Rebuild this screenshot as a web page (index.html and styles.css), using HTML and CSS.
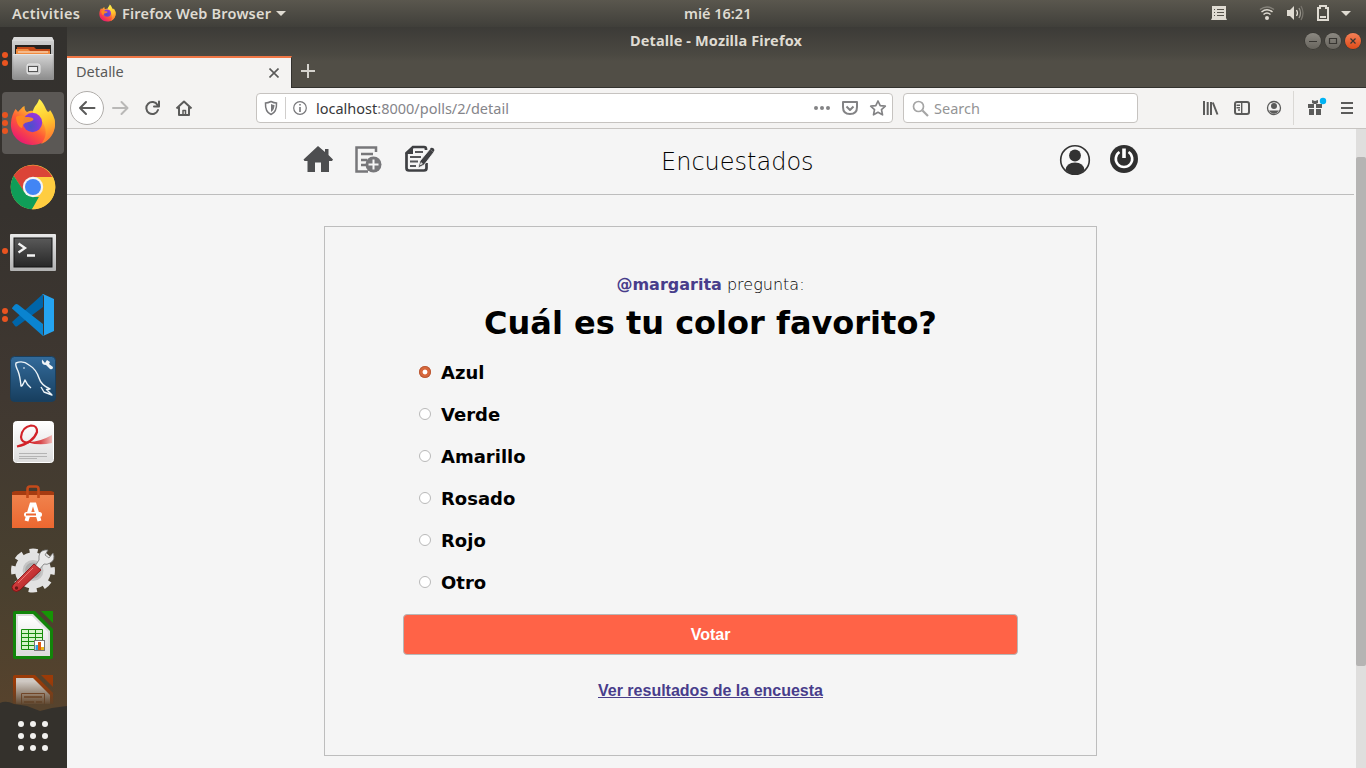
FILE: index.html
```html
<!DOCTYPE html>
<html lang="es">
<head>
<meta charset="utf-8">
<title>Detalle</title>
<link rel="stylesheet" href="styles.css">
</head>
<body>
<svg width="0" height="0" class="defs">
  <defs>
    <linearGradient id="gray" x1="0" y1="0" x2="0" y2="1"><stop offset="0" stop-color="#d5d5d5"/><stop offset="1" stop-color="#8e8e8e"/></linearGradient>
    <linearGradient id="fox" x1="1" y1="0" x2=".2" y2="1"><stop offset="0" stop-color="#fff44f"/><stop offset=".35" stop-color="#ffb02e"/><stop offset=".62" stop-color="#ff5a36"/><stop offset="1" stop-color="#e5107a"/></linearGradient>
    <linearGradient id="flame" x1=".4" y1="0" x2=".6" y2="1"><stop offset="0" stop-color="#fff250"/><stop offset=".5" stop-color="#ffc62c"/><stop offset="1" stop-color="#ff6d33"/></linearGradient>
    <radialGradient id="globe" cx=".4" cy=".7" r=".7"><stop offset="0" stop-color="#4a52c8"/><stop offset=".5" stop-color="#7040d8"/><stop offset="1" stop-color="#9a35d8"/></radialGradient>
    <linearGradient id="screen" x1="0" y1="0" x2="0" y2="1"><stop offset="0" stop-color="#595959"/><stop offset="1" stop-color="#272727"/></linearGradient>
    <linearGradient id="frame" x1="0" y1="0" x2="0" y2="1"><stop offset="0" stop-color="#e8e8e8"/><stop offset="1" stop-color="#b2b2b2"/></linearGradient>
    <linearGradient id="sea" x1="0" y1="0" x2="0" y2="1"><stop offset="0" stop-color="#336b9b"/><stop offset="1" stop-color="#173e5e"/></linearGradient>
    <linearGradient id="paper" x1="0" y1="0" x2="0" y2="1"><stop offset="0" stop-color="#fff"/><stop offset="1" stop-color="#dcdcdc"/></linearGradient>
    <linearGradient id="ribbon" x1="0" y1="0" x2="1" y2="0"><stop offset="0" stop-color="#cf1118"/><stop offset=".6" stop-color="#d94a4d"/><stop offset="1" stop-color="#f0b9b6"/></linearGradient>
    <linearGradient id="bag" x1="0" y1="0" x2="0" y2="1"><stop offset="0" stop-color="#f0824c"/><stop offset="1" stop-color="#ec6730"/></linearGradient>
    <linearGradient id="red" x1="0" y1="0" x2="1" y2="1"><stop offset="0" stop-color="#e75a57"/><stop offset="1" stop-color="#a81216"/></linearGradient>
    <linearGradient id="shadefade" x1="0" y1="0" x2="0" y2="1"><stop offset=".2" stop-color="#5a4129" stop-opacity="0"/><stop offset=".95" stop-color="#5a4129"/></linearGradient>
    <symbol id="firefox" viewBox="0 0 46 48">
      <path fill="url(#fox)" d="M5.500 11C6.500 12 7.500 13 8 14C10 12 12 9 14.500 8C14.500 11 15 13 17 14C20 12.500 26 12 29 15L44 20C48 35 36 47 22.500 47C9 47 0 37 1 25C1.300 19 3.500 14.500 5.500 11Z"/>
      <path fill="url(#flame)" d="M29 1C34 4 35 11 38 14C38 14 40 13 40 12C43 16 45.500 21 45 28C44 38 37 44 31 46C37 39 37 32 33 25C29 20 22 19 23 13C24 8 28 6 29 1Z"/>
      <circle cx="22.500" cy="24.500" r="9.700" fill="url(#globe)"/>
      <path fill="#ff8b1e" d="M6 19C9 17 13 17 15 19C18 19 22 19 23.500 21C23 24 17 23.500 14.500 25.500C12 27 13 29 12 30C8 29 6 23 6 19Z" opacity=".9"/>
    </symbol>
  </defs>
</svg>

<header class="topbar">
  <span class="ui activities">Activities</span>
  <svg class="mini-fox" width="17" height="18"><use href="#firefox"/></svg>
  <span class="ui app-name">Firefox Web Browser</span>
  <svg class="caret" width="10" height="5" viewBox="0 0 10 5"><path fill="#dfdbd2" d="M0 0H10L5 5Z"/></svg>
  <span class="ui clock">mié 16:21</span>
  <svg class="tray" width="160" height="27" viewBox="0 0 160 27" fill="none" stroke="#dfdbd2">
    <path fill="#dfdbd2" stroke="none" d="M6 6H20V18L21 20H5L6 18Z"/>
    <path stroke="#56534b" stroke-width="1" d="M8 9.500H9M11 9.500H18M8 12.500H9M11 12.500H18M8 15.500H9M11 15.500H18"/>
    <circle cx="61" cy="18" r="2" fill="#dfdbd2" stroke="none"/>
    <path stroke-width="1.500" d="M57.500 14.500Q61 11.500 64.500 14.500M55.500 12Q61 7.500 66.500 12"/>
    <path stroke="#85827a" stroke-width="1.500" d="M54 9.500Q61 4.500 68 9.500"/>
    <path fill="#dfdbd2" stroke="none" d="M81 10H84L88 6V20L84 16H81Z"/>
    <path stroke-width="1.300" d="M90.500 10Q92.500 13 90.500 16"/><path stroke="#9b988f" stroke-width="1.300" d="M93 8Q96 13 93 18"/><path stroke="#77746c" stroke-width="1.300" d="M95 6Q99 13 95 20"/>
    <path stroke-width="2" d="M112 8H114V6H120V8H122V20H112Z"/><path stroke-width="2" d="M114 17H120"/>
    <path fill="#dfdbd2" stroke="none" d="M135 11H145L140 16Z"/>
  </svg>
</header>

<div class="desktop">
  <nav class="dock">
    <div class="dock-list">
      <svg class="slot" viewBox="0 0 67 64">
        <g fill="#e95420"><circle cx="5" cy="28" r="3"/><circle cx="5" cy="36" r="3"/></g>
        <path fill="url(#gray)" d="M14 10H52L54 14V52Q54 53 53 53H14Q12 53 12 51V14Z"/><path fill="#dadada" d="M14 10H52L54 14H12Z"/>
        <path fill="#25221f" d="M15 18H51V28H15Z"/><path fill="#c34a18" d="M17 20H34L36 22H50V27H17Z"/><path fill="#f08a3e" d="M16 22H28L30 24H50V28H16Z"/><path fill="#fbe9d6" d="M18 24.500H48V25.500H18Z"/>
        <path fill="url(#gray)" d="M13 27H53L52 52H14Z"/><path fill="#e4e4e4" d="M13 27H53V28H13Z"/>
        <rect x="27" y="37" width="13" height="10" rx="2" fill="#c9c9c9" stroke="#ececec"/><rect x="28.500" y="39.500" width="9" height="5" fill="#eee" stroke="#555"/>
      </svg>
      <svg class="slot" viewBox="0 0 67 64">
        <rect x="2" y="1" width="62" height="62" rx="4" fill="#5b5855"/>
        <g fill="#e95420"><circle cx="5" cy="24" r="3"/><circle cx="5" cy="32" r="3"/><circle cx="5" cy="40" r="3"/></g>
        <use href="#firefox" x="10" y="7" width="46" height="48"/>
      </svg>
      <svg class="slot" viewBox="0 0 67 64">
        <circle cx="33" cy="32" r="22.300" fill="#ffcd40"/>
        <path fill="#db4437" d="M13.700 20.850A22.300 22.300 0 0 1 52.300 22H33L24 37Z"/>
        <path fill="#0f9d58" d="M13.700 20.850L24.300 37L33 42H41.500L32 54.300A22.300 22.300 0 0 1 13.700 20.850Z"/>
        <path fill="#ffcd40" d="M33 22H52.900A22.300 22.300 0 0 1 32 54.300L41.700 37Z"/>
        <circle cx="33" cy="32" r="10.200" fill="#f4f4f4"/><circle cx="33" cy="32" r="8" fill="#4285f4"/>
      </svg>
      <svg class="slot" viewBox="0 0 67 64">
        <circle cx="5" cy="32" r="3" fill="#e95420"/>
        <rect x="10" y="15" width="46" height="37" rx="1" fill="url(#frame)"/><rect x="14" y="19" width="38" height="29" fill="url(#screen)" stroke="#151515"/>
        <path fill="none" stroke="#f3f3f3" stroke-width="2.300" d="M18.500 24.500L25 29L18.500 33.500M27 36.500H35"/>
      </svg>
      <svg class="slot" viewBox="0 0 67 64">
        <g fill="#e95420"><circle cx="5" cy="28" r="3"/><circle cx="5" cy="36" r="3"/></g>
        <path fill="#0065a9" d="M12 39L15 43Q16 44 17.500 43L43 24V11L12 39Z"/>
        <path fill="#0a84d0" d="M12 25L15 21.500Q16.500 20.500 18 21.500L43 41V53L12 25.500Z"/>
        <path fill="#25a4f1" d="M43 11L54 16V48L43 53Q44 53 44 50V14Q44 11 42 11.500Z"/>
      </svg>
      <svg class="slot" viewBox="0 0 67 64">
        <rect x="10.500" y="9.500" width="45" height="45" rx="4" fill="url(#sea)" stroke="#1a3f5d"/>
        <path fill="none" stroke="#edf4f8" stroke-width="1.400" stroke-linejoin="round" d="M31 41Q27 38 25 33Q22 40 21 39Q20 29 18 24Q15 18 16 16Q23 13 29 18Q36 22 39 31Q41 38 50 42L46.500 42.500L52 48L44 45L41 40"/><circle cx="24" cy="21" r=".8" fill="#fff"/>
        <path fill="#f1f5f7" d="M42 12.500L45 16L47 13L50 15L49 17L53 20Q53 23 50 22L46 18Q41 18 42 12.500Z"/>
      </svg>
      <svg class="slot" viewBox="0 0 67 64">
        <rect x="13.500" y="10.500" width="40" height="41" rx="3" fill="url(#paper)" stroke="#fff"/>
        <path fill="none" stroke="#d22228" stroke-width="2.200" d="M17 35.500Q33 32 37 21Q37.500 14.500 31 14.500Q22 16 21 26Q21.500 32 29 31.500"/><path fill="url(#ribbon)" d="M24 30.500Q36 33 52 24V32Q38 35 24 30.500Z"/>
        <path stroke="#b4b4b4" d="M19 42.500H47M19 45.500H47M19 47.500H37"/>
      </svg>
      <svg class="slot" viewBox="0 0 67 64">
        <path fill="#a63b11" d="M12 17L15 16H51L54 17V22H12Z"/><path fill="url(#bag)" d="M12 20H54V53H12Z"/>
        <path fill="none" stroke="#c44a1a" stroke-width="2.600" d="M27.500 23V14Q27.500 11.500 30 11.500H36Q38.500 11.500 38.500 14V23"/>
        <path fill="none" stroke="#fff" stroke-width="4" d="M26.500 46L31.500 29.500H34.500L39.500 46"/><rect x="24" y="37" width="18" height="5" rx="2.500" fill="#fff"/><path stroke="#ec6730" stroke-width="2" d="M26 39.500H36"/>
      </svg>
      <svg class="slot" viewBox="0 0 67 64">
        <circle cx="33" cy="31.500" r="19.200" fill="none" stroke="#e4e4e4" stroke-width="5.500" stroke-dasharray="8.080 7" stroke-dashoffset="4.040"/>
        <circle cx="33" cy="31.500" r="14.200" fill="#c4c4c4" stroke="#e2e2e2" stroke-width="7.500"/><circle cx="33" cy="31.500" r="8" fill="#aaa"/>
        <path fill="#e9e9e9" stroke="#777" stroke-width=".8" d="M35 27L39 21Q38 12 45 11H48L45 16L49 19L53 14Q56 21 50 24Q47 26 44 25L39 31Z"/>
        <path fill="url(#red)" stroke="#81090d" stroke-width=".8" d="M34 25L41 31L20 51Q16 54 13 51Q11 48 13 46Z"/><circle cx="16.500" cy="49" r="1.700" fill="#6b1917"/><path stroke="#ee7775" d="M33 29L18 44"/>
      </svg>
      <svg class="slot" viewBox="0 0 67 64">
        <path fill="#12850a" d="M15 8H35L53 26V54Q53 56 51 56H15Q13 56 13 54V10Q13 8 15 8Z"/><path fill="#169505" d="M41 8H53V20Z"/><path fill="#dedede" d="M16 11H33L50 28V53H16Z"/><path fill="url(#paper)" d="M18 13H32L48 29V51H18Z"/>
        <path fill="#d4f4c8" stroke="#168c0b" d="M21.500 26.500H42.500V46.500H21.500ZM21.500 30.500H42.500M21.500 34.500H42.500M21.500 38.500H42.500M21.500 42.500H42.500M28.500 26.500V46.500M35.500 26.500V46.500"/>
        <rect x="34.500" y="37.500" width="10" height="10" fill="#fff" stroke="#777"/><path fill="#2e9fe0" d="M35.500 42H38V47H35.500Z"/><path fill="#df5a14" d="M38 39H41V47H38Z"/><path fill="#e8b41a" d="M41 44H44V47H41Z"/>
      </svg>
      <svg class="slot" viewBox="0 0 67 64">
        <path fill="#9b3b08" d="M15 8H35L53 26V56H13V10Q13 8 15 8Z"/><path fill="#9b3b08" d="M41 8H53V20Z"/><path fill="#cfc9c3" d="M16 11H33L50 28V56H16Z"/>
        <path fill="#d8c7b8" stroke="#884a25" d="M21.500 26.500H44.500V45H21.500Z"/><path stroke="#99623d" stroke-width="2" d="M24 30H42M24 35H34M36 35H42"/>
        <rect x="12" y="8" width="42" height="32" fill="url(#shadefade)"/>
      </svg>
    </div>
    <svg class="apps" width="67" height="74" viewBox="0 -10 67 74">
      <path fill="#34312c" d="M0 -1Q6 -4 14 0L27 2L40 7L52 4L67 2V64H0Z"/>
      <g fill="#f2f1ef"><circle cx="21" cy="20" r="3"/><circle cx="33" cy="20" r="3"/><circle cx="45" cy="20" r="3"/><circle cx="21" cy="32" r="3"/><circle cx="33" cy="32" r="3"/><circle cx="45" cy="32" r="3"/><circle cx="21" cy="44" r="3"/><circle cx="33" cy="44" r="3"/><circle cx="45" cy="44" r="3"/></g>
    </svg>
  </nav>

  <section class="window">
    <div class="titlebar">
      <span class="ui win-title">Detalle - Mozilla Firefox</span>
      <div class="controls">
        <svg class="ctl" viewBox="0 0 16 16"><path d="M4 8.500H12"/></svg>
        <svg class="ctl" viewBox="0 0 16 16"><path d="M4.500 5.500H11.500V10.500H4.500Z"/></svg>
        <svg class="ctl close" viewBox="0 0 16 16"><path d="M5.500 5.500L10.500 10.500M10.500 5.500L5.500 10.500"/></svg>
      </div>
    </div>
    <div class="tabs">
      <div class="tab"><span class="ui tab-title">Detalle</span><svg class="tab-close" width="10" height="10" viewBox="0 0 10 10"><path fill="none" stroke="#5a5a59" stroke-width="1.600" d="M.5 .5L9.500 9.500M9.500 .5L.5 9.500"/></svg></div>
      <svg class="new-tab" width="14" height="14" viewBox="0 0 14 14"><path stroke="#d5d3cd" stroke-width="2" d="M7 0V14M0 7H14"/></svg>
    </div>
    <div class="toolbar">
      <svg class="nav-icons" width="186" height="40" viewBox="67 88 186 40" fill="none" stroke="#5b5b5a" stroke-width="2" stroke-linejoin="round" stroke-linecap="round">
        <circle cx="87" cy="108" r="16.500" fill="#fff" stroke="#b0adaa" stroke-width="1"/>
        <path d="M94.500 108H80M86 102L80 108L86 114"/>
        <path stroke="#b9b8b7" d="M113 108H127M121.500 102L127.500 108L121.500 114"/>
        <path d="M157.500 105A6 6 0 1 0 158 110M159 101.500V106.500H154"/>
        <path stroke-linecap="butt" d="M176.500 108.500L184 101.500L191.500 108.500M179 107V115H189V107"/><path stroke-width="1.500" d="M183 114.500V110.500H185.500V114.500"/>
      </svg>
      <div class="urlbox">
        <svg width="52" height="28" viewBox="257 94 52 28" fill="none" stroke="#77777a" stroke-width="1.500">
          <path d="M265.500 103Q268 103 271 101.500Q274 103 276.500 103Q277 112 271 114.500Q265 112 265.500 103Z"/><path fill="#77777a" stroke="none" d="M271 104Q273 105 274.500 105Q274.500 110 271 112Z"/>
          <path stroke="#d0cecc" stroke-width="1" d="M285.500 97V119"/>
          <circle cx="300" cy="108" r="6.300" stroke-width="1.200"/><path stroke-width="1.600" d="M300 107V112M300 104V105.600"/>
        </svg>
        <span class="ui url"><b>localhost</b>:8000/polls/2/detail</span>
        <svg class="url-actions" width="82" height="28" viewBox="810 94 82 28" fill="none" stroke="#838385" stroke-width="2" stroke-linejoin="round">
          <g fill="#838385" stroke="none"><circle cx="816" cy="108" r="2"/><circle cx="822" cy="108" r="2"/><circle cx="828" cy="108" r="2"/></g>
          <path d="M843 102H857V107Q857 114 850 114Q843 114 843 107Z"/><path d="M846.500 106.500L850 110L853.500 106.500"/>
          <path stroke-width="1.700" d="M878 101L880.200 105.600L885.300 106.200L881.500 109.600L882.500 114.800L878 112.300L873.500 114.800L874.500 109.600L870.700 106.200L875.800 105.600Z"/>
        </svg>
      </div>
      <div class="searchbox">
        <svg width="17" height="17" viewBox="0 0 17 17" fill="none" stroke="#a5a5a5" stroke-width="1.700"><circle cx="6.500" cy="6.500" r="5"/><path stroke-width="2.200" d="M10.500 10.500L16 16"/></svg>
        <span class="ui search-text">Search</span>
      </div>
      <svg class="tool-icons" width="171" height="40" viewBox="1195 88 171 40" fill="none" stroke="#5b5b5a" stroke-width="2">
        <path d="M1204 101V115M1207.700 102V115M1211 102V115M1212.800 102.500L1217.500 114.500"/>
        <rect x="1235" y="102" width="14" height="12" rx="2"/><path stroke-width="1.400" d="M1241.700 102V114M1236.500 105.300H1240M1236.500 107.700H1240M1238 110H1240"/>
        <circle cx="1274" cy="108" r="6.500" stroke-width="1.300"/><circle cx="1274" cy="106" r="3" fill="#5b5b5a" stroke="none"/><path fill="#5b5b5a" stroke="none" d="M1269 110.500H1279Q1277 113.700 1274 113.700Q1271 113.700 1269 110.500Z"/>
        <path stroke="#dad8d5" stroke-width="1" d="M1293.500 91V125"/>
        <path fill="#5b5b5a" stroke="none" d="M1308 104H1314V108H1308ZM1316 104H1322V108H1316ZM1309 109H1314V115H1309ZM1316 109H1321V115H1316ZM1312 100L1315 101L1318 100V103L1316 104H1314L1312 103Z"/>
        <circle cx="1323" cy="101" r="3.200" fill="#00b3f4" stroke="none"/>
        <path d="M1341 103H1353M1341 108H1353M1341 113H1353"/>
      </svg>
    </div>

    <div class="viewport">
      <main class="page">
        <header class="site-header">
          <div class="site-nav left">
            <svg width="150" height="65" viewBox="290 129 150 65">
              <path fill="#4d4e50" d="M318 146L325 152V149H328.500V155L333 159.500L332 161H329V172H321V162.500H315V172H307.500V161H304.500L303.500 159.500Z"/>
              <g fill="none" stroke="#77777a" stroke-width="2.500"><path d="M376 152V147.500H356.500V171.500H368"/><path d="M361 154H373M361 160H367M361 165H366"/></g>
              <circle cx="373.500" cy="164.500" r="8" fill="#77777a"/><path stroke="#f5f5f5" stroke-width="2" d="M373.500 159.500V169.500M368.500 164.500H378.500"/>
              <path fill="none" stroke="#3f4043" stroke-width="2.700" d="M426 150V149Q426 147 424 147H413L406.500 153V168Q406.500 170.500 409 170.500H424Q426.500 170.500 426.500 168V163"/><path fill="#3f4043" d="M413 146V154H405Z"/>
              <path stroke="#56575a" stroke-width="1.800" d="M415 152H423M410 157H421M410 161.500H418M410 166H416"/>
              <path fill="#3f4043" stroke="#f5f5f5" stroke-width=".8" d="M418 168L420 161L430 149L434 152L424 165Z"/><path fill="#3f4043" d="M430.500 148Q433.500 147 434.500 150L433.500 152L430 149.500Z"/><path fill="#ddd" d="M419.500 165.500L421 162L423 164Z"/>
            </svg>
          </div>
          <h1 class="brand">Encuestados</h1>
          <div class="site-nav right">
            <svg width="90" height="65" viewBox="1055 129 90 65">
              <circle cx="1075" cy="160" r="14.300" fill="#f8f8f8" stroke="#333" stroke-width="1.600"/><circle cx="1075" cy="155.500" r="5.900" fill="#333"/><path fill="#333" d="M1065.500 170Q1066.500 162.500 1075 162.500Q1083.500 162.500 1084.500 170Q1080 174.500 1075 174.500Q1070 174.500 1065.500 170Z"/>
              <circle cx="1124" cy="159" r="14" fill="#303030"/><path fill="none" stroke="#fff" stroke-width="2.600" d="M1119.500 152A8.200 8.200 0 1 0 1128.500 152"/><path stroke="#fff" stroke-width="3.600" d="M1124 148.500V158"/>
            </svg>
          </div>
        </header>
        <article class="card">
          <p class="asker"><b>@margarita</b> pregunta:</p>
          <h2 class="question">Cuál es tu color favorito?</h2>
          <ul class="options">
            <li><i class="radio on"></i>Azul</li>
            <li><i class="radio"></i>Verde</li>
            <li><i class="radio"></i>Amarillo</li>
            <li><i class="radio"></i>Rosado</li>
            <li><i class="radio"></i>Rojo</li>
            <li><i class="radio"></i>Otro</li>
          </ul>
          <button class="vote">Votar</button>
          <a class="results" href="#">Ver resultados de la encuesta</a>
        </article>
      </main>
      <div class="scrollbar"><div class="thumb"></div></div>
    </div>
  </section>
</div>
</body>
</html>
```
FILE: styles.css
```css
* { box-sizing: border-box; }
html, body { margin: 0; height: 768px; overflow: hidden; }
body { display: flex; flex-direction: column; background: #f5f5f5; font-family: "DejaVu Sans", sans-serif; }
svg { display: block; flex: none; }
.defs { position: absolute; }
.ui { font-family: "Noto Sans", sans-serif; font-size: 14.5px; line-height: 20px; padding-bottom: 2px; white-space: nowrap; }

.topbar { position: relative; flex: none; height: 27px; display: flex; align-items: center; background: linear-gradient(#5a574e, #403f3a); color: #dfdbd2; }
.topbar .ui { font-weight: 600; }
.activities { width: 68px; margin-left: 12px; letter-spacing: .36px; }
.mini-fox { margin: 0 5px 1px 19px; }
.app-name { width: 150px; padding-left: 1px; letter-spacing: .2px; }
.caret { margin-left: 5px; }
.clock { margin-left: 398px; }
.tray { margin-left: auto; }

.desktop { flex: 1; min-height: 0; display: flex; }
.dock { width: 67px; height: 741px; flex: none; display: flex; flex-direction: column; background: linear-gradient(#33312e 0, #36322e 25%, #403831 50%, #49402f 75%, #57432d 92%); }
.dock-list { height: 677px; flex: none; overflow: hidden; }
.slot { width: 67px; height: 64px; }
.apps { margin-top: -10px; }

.window { flex: 1; min-width: 0; display: flex; flex-direction: column; }
.titlebar { height: 28px; flex: none; display: flex; align-items: center; background: linear-gradient(#3c3b37, #4b4942); padding: 0 5px 0 563px; color: #dfdbd2; }
.win-title { font-weight: 700; letter-spacing: .13px; }
.controls { margin-left: auto; display: flex; gap: 4px; }
.ctl { width: 16px; height: 16px; border-radius: 50%; background: linear-gradient(#8c8982, #67645d); box-shadow: 0 0 0 .5px #33322e; fill: none; stroke: #383632; stroke-width: 1.2; }
.ctl.close { background: linear-gradient(#f58057, #df4b18); }
.tabs { height: 33px; flex: none; display: flex; align-items: center; background: linear-gradient(#4b4942, #514e46 20%); border-bottom: 1px solid #33322e; }
.tab { width: 225px; height: 32px; margin: 1px 0 -1px; display: flex; align-items: center; justify-content: space-between; background: #f4f3f2; border-top: 2px solid #f07746; border-right: 1px solid #33322e; padding: 0 12px 1px 9px; color: #5a5a59; }
.tab-title { margin-top: -1px; }
.new-tab { margin-left: 9px; }

.toolbar { height: 41px; flex: none; display: flex; align-items: center; background: #f4f3f2; border-bottom: 1px solid #c7c4c1; }
.nav-icons { margin-right: 3px; }
.urlbox, .searchbox { height: 30px; background: #fff; border: 1px solid #c6c3c0; border-radius: 4px; display: flex; align-items: center; }
.urlbox { width: 637px; }
.url { margin-left: 7px; margin-top: 1px; color: #85858a; }
.url b { font-weight: 400; color: #38383a; }
.url-actions { margin-left: auto; }
.searchbox { width: 235px; margin-left: 10px; padding-left: 8px; }
.search-text { margin-left: 5px; margin-top: 1px; color: #949495; }
.tool-icons { margin-left: auto; }

.viewport { flex: 1; min-height: 0; display: flex; background: #f5f5f5; }
.page { width: 1287px; }
.site-header { height: 66px; display: flex; align-items: center; border-bottom: 1px solid #bdbdbd; }
.site-nav.left { width: 594px; padding-left: 223px; }
.brand { margin: 0; width: 153px; font-size: 24px; line-height: 32px; font-weight: 200; white-space: nowrap; color: #000; }
.site-nav.right { margin-left: 241px; }
.card { width: 773px; height: 530px; margin: 31px 0 0 257px; border: 1px solid #bdbdbd; padding: 48px 78px 0; display: flex; flex-direction: column; }
.asker { margin: 0; text-align: center; font-size: 16px; line-height: 19px; font-weight: 200; }
.asker b { font-weight: 700; color: #483d8b; }
.question { margin: 10px 0 14px; text-align: center; font-size: 32px; line-height: 38px; font-weight: 700; white-space: nowrap; }
.options { list-style: none; margin: 0; padding: 5px 0 1px 16px; }
.options li { display: flex; align-items: center; height: 22px; margin-bottom: 20px; font-size: 18px; font-weight: 700; }
.radio { width: 12px; height: 12px; margin: 0 10px 1px 0; border: 1px solid #b9b9b9; border-radius: 50%; background: #fff; }
.radio.on { border: 0; background: radial-gradient(circle, #fff 0 2px, #d8673b 2.8px); box-shadow: inset 0 0 0 1px #b95b38; }
.vote { height: 41px; flex: none; margin: 0; border: 1px solid #b7b7b7; border-radius: 4px; background: #ff6347; color: #fff; font: 700 16px "Liberation Sans", sans-serif; }
.results { align-self: center; margin-top: 26px; font: 700 16px/20px "Liberation Sans", sans-serif; color: #483d8b; }
.scrollbar { width: 10px; margin-left: auto; background: #dfdedd; padding-top: 28px; }
.thumb { height: 509px; background: #b5b4b3; border-radius: 2px; }
```
